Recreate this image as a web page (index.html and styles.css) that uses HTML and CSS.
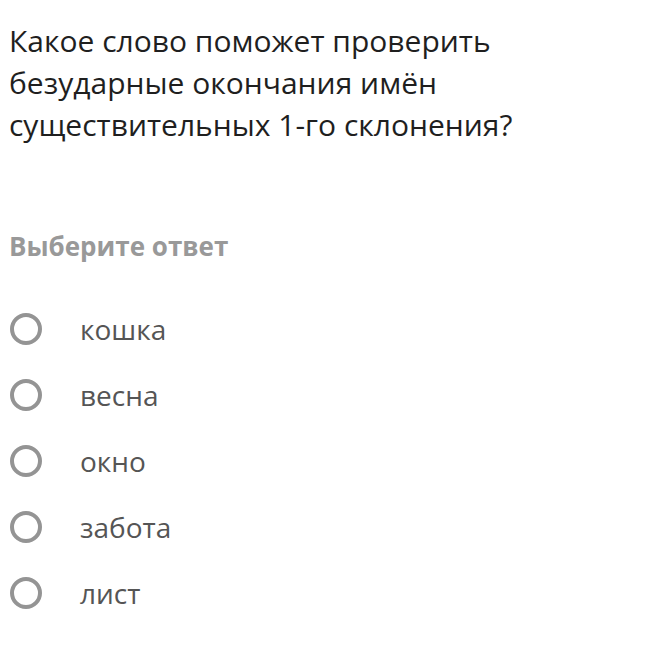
FILE: index.html
```html
<!DOCTYPE html>
<html lang="ru">
<head>
<meta charset="utf-8">
<link rel="stylesheet" href="styles.css">
</head>
<body>
<div class="quiz">
  <h1 class="question">Какое слово поможет проверить безударные окончания имён существительных 1-го склонения?</h1>
  <div class="hint">Выберите ответ</div>
  <ul class="options">
    <li class="option"><span class="radio"></span><span class="label">кошка</span></li>
    <li class="option"><span class="radio"></span><span class="label">весна</span></li>
    <li class="option"><span class="radio"></span><span class="label">окно</span></li>
    <li class="option"><span class="radio"></span><span class="label">забота</span></li>
    <li class="option"><span class="radio"></span><span class="label">лист</span></li>
  </ul>
</div>
</body>
</html>
```
FILE: styles.css
```css
* { box-sizing: border-box; }
html, body { margin: 0; padding: 0; background: #fff; }
body { font-family: "Open Sans", "Noto Sans", sans-serif; }
.quiz { padding: 20px 9px 0 9px; width: 560px; }
.question {
  margin: 0;
  font-size: 30px;
  line-height: 42px;
  font-weight: 400;
  color: #1f1f1f;
}
.hint {
  margin-top: 82px;
  font-size: 26px;
  line-height: 36px;
  font-weight: 700;
  color: #999;
}
.options { list-style: none; margin: 32px 0 0 0; padding: 0; }
.option {
  display: flex;
  align-items: center;
  height: 66px;
}
.radio {
  width: 32px;
  height: 32px;
  border: 4px solid #949494;
  border-radius: 50%;
  margin-left: 1px;
  flex: none;
}
.label {
  margin-left: 38px;
  font-size: 28px;
  line-height: 36px;
  color: #555;
}
```
